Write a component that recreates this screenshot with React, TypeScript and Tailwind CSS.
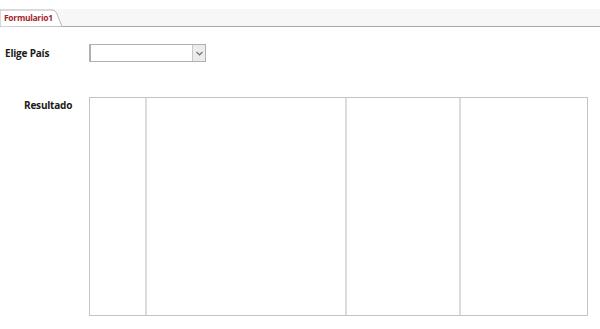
import React from 'react';

const font = { fontFamily: '"Open Sans", "Liberation Sans", sans-serif' };

const TabStrip: React.FC = () => (
  <div className="mt-[9px] flex h-[18px] border-b border-[#a8a8a8] bg-[#f7f7f7]">
    <div className="relative h-full w-[64px]">
      <svg className="absolute inset-0" width="64" height="18" viewBox="0 0 64 18">
        <path d="M0 18 V1 H52 C55 1 56 3 57 5 L62 17.5" fill="#ffffff" stroke="#b8b8b8" strokeWidth="1" />
        <path d="M0 18 H64" stroke="#a8a8a8" strokeWidth="1" />
      </svg>
      <span className="absolute left-[4px] top-[3px] text-[8.5px] leading-[12px] font-bold tracking-[-0.3px] text-[#a4262c]">
        Formulario1
      </span>
    </div>
  </div>
);

const App: React.FC = () => {
  const columns = ['w-[57px]', 'w-[200px]', 'w-[114px]', 'flex-1'];

  return (
    <div className="h-[329px] w-[600px] overflow-hidden bg-white" style={font}>
      <TabStrip />

      <div className="mt-[17px] flex items-center">
        <div className="w-[89px] pl-[5px] text-[10px] font-bold tracking-[-0.2px] text-[#1a1a1a]">Elige País</div>
        <div className="flex h-[18px] w-[117px] border border-[#b0b0b0] border-l-2 bg-white">
          <div className="flex-1" />
          <div className="flex w-[13px] items-center justify-center border-l border-[#c8c8c8] bg-[#ececec]">
            <svg width="7" height="5" viewBox="0 0 7 5">
              <path d="M0.5 1 L3.5 4 L6.5 1" fill="none" stroke="#6d6d6d" strokeWidth="1.1" />
            </svg>
          </div>
        </div>
      </div>

      <div className="mt-[35px] flex items-start">
        <div className="w-[89px] pl-[24px] pt-[1px] text-[10px] font-bold tracking-[-0.2px] text-[#1a1a1a]">Resultado</div>
        <div className="flex h-[219px] w-[499px] border border-[#c4c4c4]">
          {columns.map((c, i) => (
            <div key={i} className={`${c} h-full ${i < 3 ? 'border-r-2 border-[#dcdcdc]' : ''}`} />
          ))}
        </div>
      </div>
    </div>
  );
};

export default App;
